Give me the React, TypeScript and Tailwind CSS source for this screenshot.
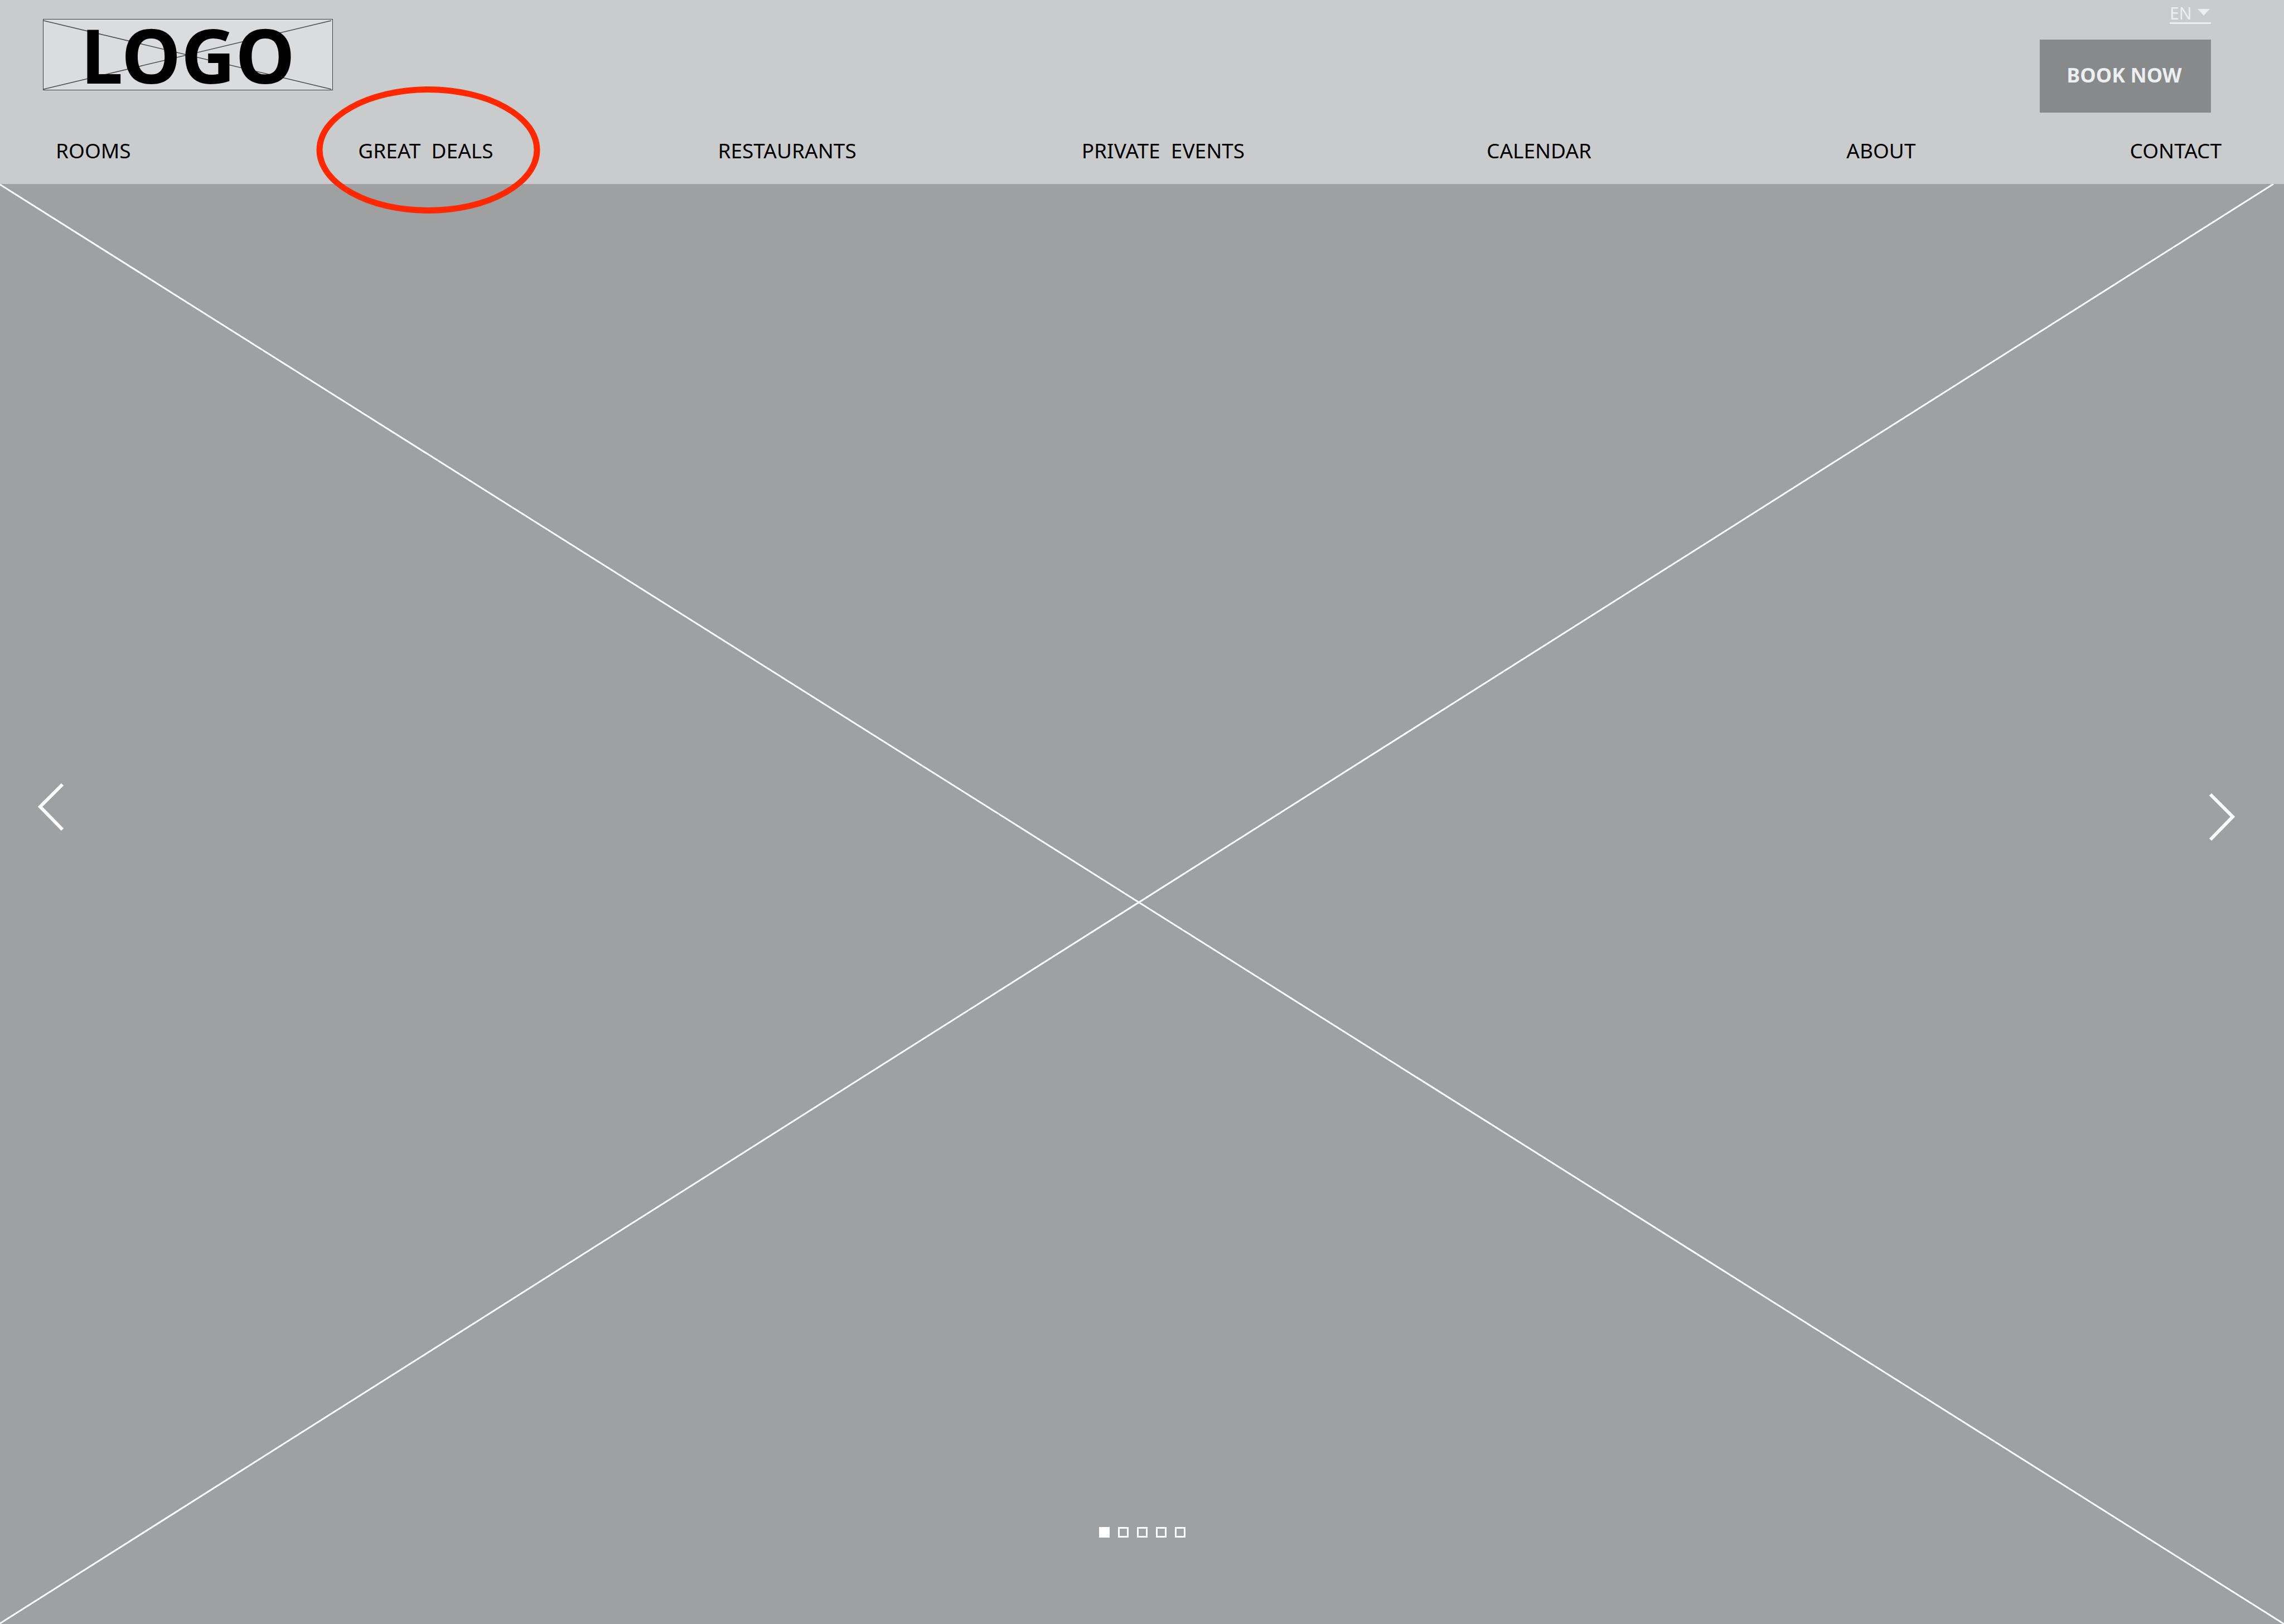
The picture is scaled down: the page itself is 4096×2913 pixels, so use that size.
import React from "react";

const navItems = [
  { label: "ROOMS", href: "#rooms" },
  { label: "GREAT  DEALS", href: "#great-deals", highlighted: true },
  { label: "RESTAURANTS", href: "#restaurants" },
  { label: "PRIVATE  EVENTS", href: "#private-events" },
  { label: "CALENDAR", href: "#calendar" },
  { label: "ABOUT", href: "#about" },
  { label: "CONTACT", href: "#contact" },
];

function Logo() {
  return (
    <a
      href="#home"
      className="relative mt-[34px] flex h-32 w-[520px] items-center justify-center border border-[#3c3d3f] bg-[#dbdcde]"
    >
      <svg
        className="absolute inset-0 h-full w-full"
        viewBox="0 0 520 128"
        preserveAspectRatio="none"
        fill="none"
        stroke="#4a4b4d"
        aria-hidden="true"
      >
        <path d="M0 2 518 127M0 127 518 2" strokeWidth="1.6" />
      </svg>
      <span className="relative text-[135px] leading-[124px] font-bold">LOGO</span>
    </a>
  );
}

function LanguageSelect() {
  return (
    <div className="relative flex h-[43px] w-[74px] border-b-[3px] border-[#eceef0]">
      <select
        aria-label="Language"
        defaultValue="EN"
        className="w-full appearance-none bg-transparent pt-[6px] text-[30px] leading-9 text-[#eceef0] outline-none"
      >
        <option>EN</option>
      </select>
      <svg
        className="pointer-events-none absolute top-4 right-[2px] h-3 w-[22px]"
        viewBox="0 0 22 12"
        preserveAspectRatio="none"
        fill="#eceef0"
        aria-hidden="true"
      >
        <path d="M0 0H22L11 12Z" />
      </svg>
    </div>
  );
}

function Header() {
  return (
    <header className="relative z-10 bg-[#cacbcd]">
      <div className="flex items-start justify-between pr-[131px] pl-[77px]">
        <Logo />
        <div className="flex flex-col items-end gap-7">
          <LanguageSelect />
          <button
            type="button"
            className="h-[131px] w-[307px] bg-[#88898b] pr-1 pb-1 text-4xl font-bold text-[#eceef0]"
          >
            BOOK NOW
          </button>
        </div>
      </div>
      <nav className="grid grid-cols-[542fr_645fr_652fr_726fr_645fr_508fr_auto] pt-11 pr-28 pb-9 pl-[100px] text-[37px] leading-[48px] whitespace-pre">
        {navItems.map((item) => (
          <a key={item.label} href={item.href} className="relative justify-self-start">
            {item.label}
            {item.highlighted && (
              <span className="pointer-events-none absolute top-[23px] left-[126px] h-[228px] w-[401px] -translate-x-1/2 -translate-y-1/2 rounded-[50%] border-11 border-[#ff2800]" />
            )}
          </a>
        ))}
      </nav>
    </header>
  );
}

function Carousel() {
  return (
    <main className="relative flex flex-1 flex-col justify-between bg-[#9fa0a1]">
      <svg
        className="absolute inset-0 h-full w-full"
        viewBox="0 0 4096 2583"
        preserveAspectRatio="none"
        fill="none"
        stroke="#fff"
        strokeWidth="3"
        aria-hidden="true"
      >
        <path d="M0 1 4096 2583M0 2582 4077 0" />
      </svg>
      <div className="relative flex items-start justify-between pt-[1072px] pr-[86px] pl-[66px]">
        <button type="button" aria-label="Previous slide">
          <svg className="h-[90px] w-[50px]" viewBox="0 0 50 90" fill="none" stroke="#fff" strokeWidth="6">
            <path d="M46 5 6 45 46 86" />
          </svg>
        </button>
        <button type="button" aria-label="Next slide" className="mt-[18px]">
          <svg className="h-[90px] w-[50px]" viewBox="0 0 50 90" fill="none" stroke="#fff" strokeWidth="6">
            <path d="M4 5 44 45 4 86" />
          </svg>
        </button>
      </div>
      <div className="relative flex justify-center gap-[15px] pb-[155px]">
        {[1, 2, 3, 4, 5].map((n) => (
          <button
            key={n}
            type="button"
            aria-label={`Slide ${n}`}
            aria-current={n === 1}
            className={
              n === 1
                ? "size-[19px] border-3 border-white bg-white"
                : "size-[19px] border-3 border-white"
            }
          />
        ))}
      </div>
    </main>
  );
}

export default function App() {
  return (
    <div className="flex min-h-screen flex-col overflow-x-hidden bg-[#9fa0a1] font-['Noto_Sans','Open_Sans',sans-serif] text-black">
      <Header />
      <Carousel />
    </div>
  );
}
